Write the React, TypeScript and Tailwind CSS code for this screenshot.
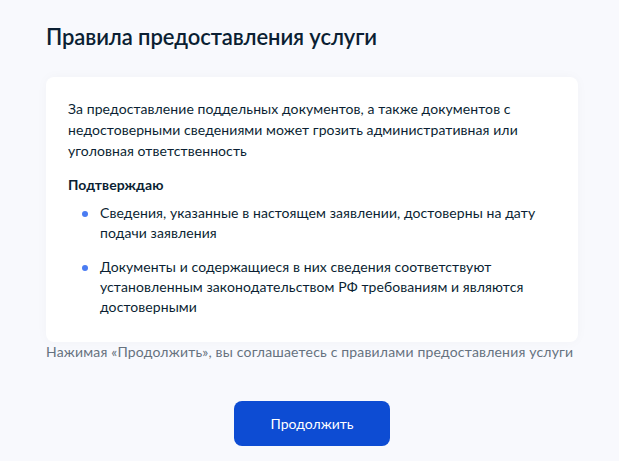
export default function App() {
  return (
    <div
      className="min-h-screen bg-[#f8f9fd] text-[#0b1f33]"
      style={{ fontFamily: "Lato, 'Noto Sans', sans-serif" }}
    >
      <div className="pl-[46px] pr-[41px] pt-[23px]">
        <h1 className="text-[22px] leading-[28px] font-semibold tracking-[-0.1px]">
          Правила предоставления услуги
        </h1>

        <div className="mt-[26px] bg-white rounded-[8px] pl-[22px] pr-[20px] pt-[21px] pb-[25px] shadow-[0_0_12px_rgba(11,31,51,0.03)] text-[14px] tracking-[0.08px]">
          <p className="leading-[21px]">
            За предоставление поддельных документов, а также документов с недостоверными сведениями
            может грозить административная или уголовная ответственность
          </p>
          <p className="mt-[13px] leading-[21px] font-bold">Подтверждаю</p>
          <ul className="mt-[8px] flex flex-col gap-[14px] leading-[20px]">
            <li className="flex">
              <span className="mt-[8px] ml-[14px] mr-[12px] w-[6px] h-[6px] rounded-full bg-[#4a7cf2] shrink-0" />
              <span>Сведения, указанные в настоящем заявлении, достоверны на дату подачи заявления</span>
            </li>
            <li className="flex">
              <span className="mt-[8px] ml-[14px] mr-[12px] w-[6px] h-[6px] rounded-full bg-[#4a7cf2] shrink-0" />
              <span>
                Документы и содержащиеся в них сведения соответствуют установленным законодательством
                РФ требованиям и являются достоверными
              </span>
            </li>
          </ul>
        </div>

        <p className="text-[14px] leading-[20px] tracking-[0.18px] text-[#66727f]">
          Нажимая «Продолжить», вы соглашаетесь с правилами предоставления услуги
        </p>

        <div className="mt-[39px] flex justify-center">
          <button className="w-[156px] h-[45px] rounded-[8px] bg-[#0d4cd3] text-white text-[14px]">
            Продолжить
          </button>
        </div>
      </div>
    </div>
  )
}
